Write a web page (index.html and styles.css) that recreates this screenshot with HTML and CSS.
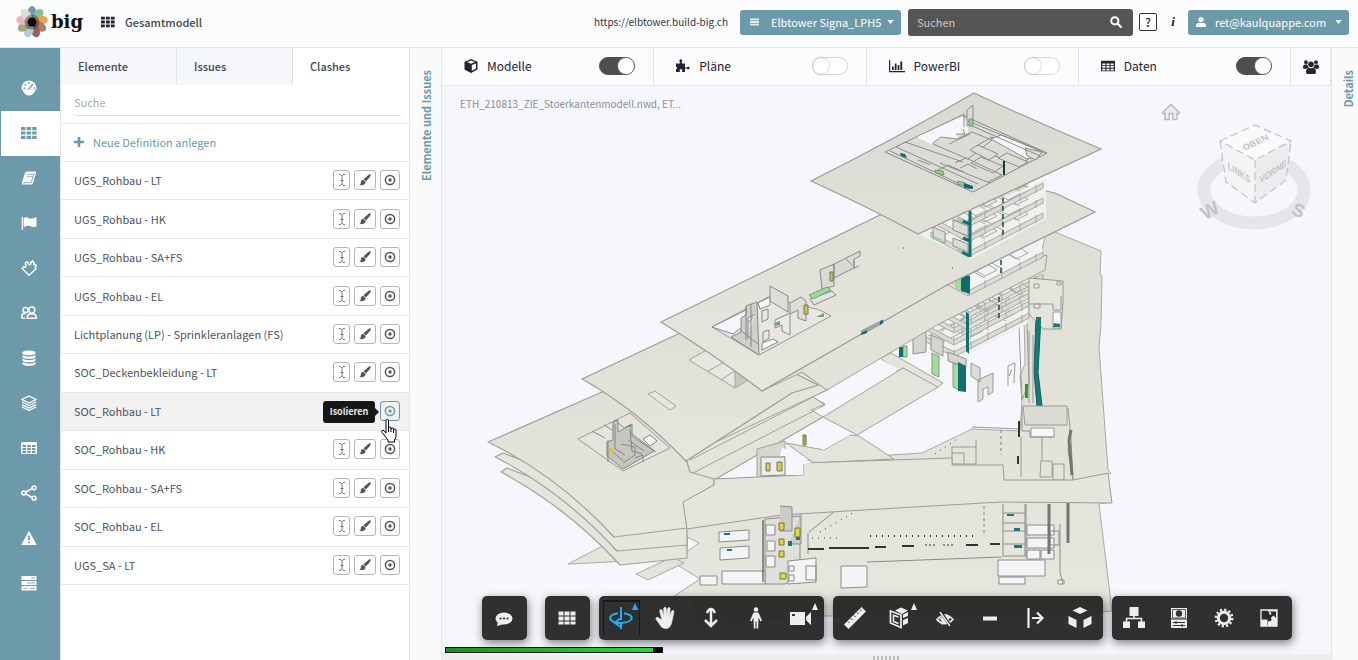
FILE: index.html
```html
<!DOCTYPE html>
<html lang="de">
<head>
<meta charset="utf-8">
<title>big – Gesamtmodell</title>
<link rel="stylesheet" href="styles.css">
</head>
<body>
<svg class="sprite" aria-hidden="true">
  <symbol id="grid" viewBox="0 0 16 14"><path d="M0 1h4.400v3.200H0zM5.600 1H10v3.200H5.600zM11.200 1h4.400v3.200h-4.400zM0 5.400h4.400v3.200H0zM5.600 5.400H10v3.200H5.600zM11.200 5.400h4.400v3.200h-4.400zM0 9.800h4.400V13H0zM5.600 9.800H10V13H5.600zM11.200 9.800h4.400V13h-4.400z"/></symbol>
  <symbol id="caret" viewBox="0 0 8 5"><path d="M0 0h8L4 5z"/></symbol>
  <symbol id="textcur" viewBox="0 0 10 14"><path d="M2 1.500q2.500-.3 3 1.200.5-1.500 3-1.200M5 2.500v9M2 12.500q2.500.3 3-1.200.5 1.500 3 1.200M3.500 7.500h3" fill="none" stroke="currentColor" stroke-width=".8"/></symbol>
  <symbol id="brush" viewBox="0 0 14 14"><path d="M13.500.5c.8.8 0 2-1 3.200L8 8.700 5.300 6.200 10.600 1.400C11.800.4 12.900-.1 13.500.5zM4.700 6.700l2.900 2.600c.3 2.700-2 4.600-7.200 3.300 1.900-.7 1.500-1.900 1.800-3.300C2.500 7.800 3.500 6.900 4.700 6.700z"/></symbol>
  <symbol id="target" viewBox="0 0 14 14"><circle cx="7" cy="7" r="4.600" fill="none" stroke="currentColor" stroke-width="1.500"/><circle cx="7" cy="7" r="1.700"/></symbol>
  <symbol id="table" viewBox="0 0 16 14"><path fill-rule="evenodd" d="M1 1h14q1 0 1 1v10q0 1-1 1H1q-1 0-1-1V2q0-1 1-1zM1.500 4v2H5V4zM6.200 4v2h3.600V4zM11 4v2h3.500V4zM1.500 7v2H5V7zM6.200 7v2h3.600V7zM11 7v2h3.500V7zM1.500 10v2H5v-2zM6.200 10v2h3.600v-2zM11 10v2h3.500v-2z"/></symbol>
</svg>

<header class="topbar">
  <a class="logo" href="#" aria-label="big">
    <svg class="flower" viewBox="-16 -16 32 32" aria-hidden="true">
      <g opacity=".9">
        <ellipse cy="-9" rx="4.500" ry="7" fill="#5b93a8"/>
        <ellipse cy="-9" rx="4.500" ry="7" fill="#7bb98c" transform="rotate(40)"/>
        <ellipse cy="-9" rx="4.500" ry="7" fill="#e79a45" transform="rotate(80)"/>
        <ellipse cy="-9" rx="4.500" ry="7" fill="#a5705f" transform="rotate(120)"/>
        <ellipse cy="-9" rx="4.500" ry="7" fill="#8f4f4a" transform="rotate(160)"/>
        <ellipse cy="-9" rx="4.500" ry="7" fill="#9fcad8" transform="rotate(200)"/>
        <ellipse cy="-9" rx="4.500" ry="7" fill="#98a06c" transform="rotate(240)"/>
        <ellipse cy="-9" rx="4.500" ry="7" fill="#efabb7" transform="rotate(280)"/>
        <ellipse cy="-9" rx="4.500" ry="7" fill="#dedccb" transform="rotate(320)"/>
      </g>
      <circle r="7.500" fill="#2a1c1c" opacity=".4"/><circle r="4.500" fill="#0d0808"/>
    </svg>
    <span>big</span>
  </a>
  <svg class="i16 dark" aria-hidden="true"><use href="#grid"/></svg>
  <h1>Gesamtmodell</h1>
  <span class="url">https://elbtower.build-big.ch</span>
  <button class="pill project" type="button">
    <svg viewBox="0 0 10 10" width="9" height="10" aria-hidden="true"><path d="M0 1h10v2H0zM0 4h10v2H0zM0 7h10v2H0z" opacity=".8"/></svg>
    <span>Elbtower Signa_LPH5</span>
    <svg class="caret"><use href="#caret"/></svg>
  </button>
  <form class="search" role="search">
    <input type="text" placeholder="Suchen" aria-label="Suchen">
    <button type="button" aria-label="Suche starten"><svg viewBox="0 0 12 12" width="12" height="12"><circle cx="4.800" cy="4.800" r="3.600" fill="none" stroke="#fff" stroke-width="2"/><path d="M7.500 7.500l3.500 3.500" stroke="#fff" stroke-width="2.300" stroke-linecap="round"/></svg></button>
  </form>
  <button class="help" type="button">?</button>
  <button class="info" type="button">i</button>
  <button class="pill user" type="button">
    <svg viewBox="0 0 10 10" width="10" height="10" aria-hidden="true"><circle cx="5" cy="2.600" r="2.600"/><path d="M0 10V8.500Q0 6 2.500 6h5Q10 6 10 8.500V10z"/></svg>
    <span>ret@kaulquappe.com</span>
    <svg class="caret"><use href="#caret"/></svg>
  </button>
</header>

<main class="shell">
  <nav class="rail" aria-label="Hauptnavigation">
    <a href="#" aria-label="Dashboard"><svg viewBox="0 0 16 16"><path d="M8 .5a7.500 7.500 0 0 0-7.300 9.200h14.600A7.500 7.500 0 0 0 8 .5zM1.500 10c1.300 3.500 3.600 5.500 6.500 5.500s5.200-2 6.500-5.500z"/><path d="M2.500 8.200h2M3.600 4l1.400 1.400M8 2v2M12.800 8h1.400M7.500 9.300l4.500-5" stroke="#6d9aaa" stroke-width="1.300"/></svg></a>
    <a href="#" class="active" aria-label="Modell"><svg viewBox="0 0 16 14"><use href="#grid"/></svg></a>
    <a href="#" aria-label="Handbuch"><svg viewBox="0 0 16 16"><path d="M5.500 1.500h9q1 0 .7 1L12 13q-.4 1.500-2 1.500H2Q.3 14.500.8 13L4 3q.4-1.500 1.500-1.500z"/><path d="M6.500 4.500h6M5.800 6.700h6" stroke="#6d9aaa" stroke-width=".7"/><path d="M2.500 12.700h7.600L13.300 3" stroke="#6d9aaa" stroke-width=".8" fill="none"/></svg></a>
    <a href="#" aria-label="Flaggen"><svg viewBox="0 0 16 16"><path d="M.7 2h1.300v13H.7zM2.700 3c4-2 5 1.500 8.500.6 1.500-.4 2.800-1 4.300-1v8.600c-4 2.200-5.500-.4-8-.4-2 0-3.300.7-4.800 1.400z"/></svg></a>
    <a href="#" aria-label="Erweiterungen"><svg viewBox="0 0 16 16"><path d="M8 15.200L1.200 8.500l1.500-1.700c1.500 1.200 3.300-.4 2-2C3.800 3.500 5 1.200 6.600 2.100c1.200.7.200 2.200 1.500 2.600 1.500.3 2.200-1.200 1.500-2.200L11.500 1l1.700 2c-1.200 1.500.5 2.700 1.700 1.700.8 1.500-1 2-.6 3.300l.7.800z" fill="none" stroke="#fff" stroke-width="1.400"/></svg></a>
    <a href="#" aria-label="Team"><svg viewBox="0 0 16 16"><g fill="none" stroke="#fff" stroke-width="1.500"><circle cx="4.500" cy="5" r="2.500"/><circle cx="10.800" cy="5" r="3"/><path d="M.8 13.300V11q0-2.500 2.500-2.500h1.500M.8 13.300h3.400M6.200 13.300q0-4.300 3-4.300h3q3 0 3 4.300z"/></g></svg></a>
    <a href="#" aria-label="Datenbank"><svg viewBox="0 0 16 16"><path d="M1.500 2.500Q2 .5 8 .5t6.500 2v1Q14 5.300 8 5.300T1.500 3.500zM1.500 5q2 1.700 6.500 1.700T14.500 5v2Q14 8.800 8 8.800T1.500 7zM1.500 8.500q2 1.700 6.500 1.700t6.500-1.700v2q-.5 1.800-6.500 1.800T1.500 10.500zM1.500 12q2 1.700 6.500 1.700t6.500-1.700v1.700q-.5 2-6.500 2t-6.500-2z"/></svg></a>
    <a href="#" aria-label="Ebenen"><svg viewBox="0 0 16 16"><path d="M8 1l7 3.500L8 8 1 4.500zM1 7l7 3.500L15 7M1 9.600l7 3.500 7-3.500M1 12l7 3.400 7-3.400" fill="none" stroke="#fff" stroke-width="1.300"/></svg></a>
    <a href="#" aria-label="Tabellen"><svg viewBox="0 0 16 14"><use href="#table"/></svg></a>
    <a href="#" aria-label="Teilen"><svg viewBox="0 0 16 16"><path d="M12 3L3 8l9 5" fill="none" stroke="#fff" stroke-width="1.500"/><g fill="#6d9aaa" stroke="#fff" stroke-width="1.500"><circle cx="2.800" cy="8" r="1.900"/><circle cx="13" cy="2.800" r="1.900"/><circle cx="13" cy="13.200" r="1.900"/></g></svg></a>
    <a href="#" aria-label="Warnungen"><svg viewBox="0 0 16 16"><path d="M8 .8L15.800 15H.2z"/><path d="M8 5.500v4.700M8 11.500v1.800" stroke="#6d9aaa" stroke-width="1.700"/></svg></a>
    <a href="#" aria-label="Server"><svg viewBox="0 0 16 16"><path d="M.5 1h15v4H.5zM.5 6h15v4H.5zM.5 11h15v4.500H.5z"/><path d="M10 3h4M6 8h8M3 13.300h3M9 13.300h5" stroke="#6d9aaa" stroke-width=".8"/></svg></a>
  </nav>

  <section class="panel">
    <div class="tabs" role="tablist">
      <button type="button" role="tab" aria-selected="false">Elemente</button>
      <button type="button" role="tab" aria-selected="false">Issues</button>
      <button type="button" role="tab" aria-selected="true">Clashes</button>
    </div>
    <div class="filter"><input type="text" placeholder="Suche" aria-label="Suche"></div>
    <button class="add" type="button"><svg viewBox="0 0 10 10" width="10" height="10" aria-hidden="true"><path d="M3.700 0h2.600v3.700H10v2.600H6.300V10H3.700V6.300H0V3.700h3.700z"/></svg>Neue Definition anlegen</button>
    <ul class="list">
      <li><span>UGS_Rohbau - LT</span><button class="b-name" type="button" aria-label="Umbenennen"><svg><use href="#textcur"/></svg></button><button class="b-brush" type="button" aria-label="Einfärben"><svg><use href="#brush"/></svg></button><button class="b-iso" type="button" aria-label="Isolieren"><svg><use href="#target"/></svg></button></li>
      <li><span>UGS_Rohbau - HK</span><button class="b-name" type="button" aria-label="Umbenennen"><svg><use href="#textcur"/></svg></button><button class="b-brush" type="button" aria-label="Einfärben"><svg><use href="#brush"/></svg></button><button class="b-iso" type="button" aria-label="Isolieren"><svg><use href="#target"/></svg></button></li>
      <li><span>UGS_Rohbau - SA+FS</span><button class="b-name" type="button" aria-label="Umbenennen"><svg><use href="#textcur"/></svg></button><button class="b-brush" type="button" aria-label="Einfärben"><svg><use href="#brush"/></svg></button><button class="b-iso" type="button" aria-label="Isolieren"><svg><use href="#target"/></svg></button></li>
      <li><span>UGS_Rohbau - EL</span><button class="b-name" type="button" aria-label="Umbenennen"><svg><use href="#textcur"/></svg></button><button class="b-brush" type="button" aria-label="Einfärben"><svg><use href="#brush"/></svg></button><button class="b-iso" type="button" aria-label="Isolieren"><svg><use href="#target"/></svg></button></li>
      <li><span>Lichtplanung (LP) - Sprinkleranlagen (FS)</span><button class="b-name" type="button" aria-label="Umbenennen"><svg><use href="#textcur"/></svg></button><button class="b-brush" type="button" aria-label="Einfärben"><svg><use href="#brush"/></svg></button><button class="b-iso" type="button" aria-label="Isolieren"><svg><use href="#target"/></svg></button></li>
      <li><span>SOC_Deckenbekleidung - LT</span><button class="b-name" type="button" aria-label="Umbenennen"><svg><use href="#textcur"/></svg></button><button class="b-brush" type="button" aria-label="Einfärben"><svg><use href="#brush"/></svg></button><button class="b-iso" type="button" aria-label="Isolieren"><svg><use href="#target"/></svg></button></li>
      <li class="hovered"><span>SOC_Rohbau - LT</span><button class="b-iso lit" type="button" aria-label="Isolieren" aria-describedby="tip"><svg><use href="#target"/></svg></button>
        <div class="tip" id="tip" role="tooltip">Isolieren</div>
        <svg class="pointer" viewBox="0 0 18 24" aria-hidden="true"><path d="M5 1.500q0-1 1.200-1t1.300 1V9q0-1 1.200-1t1.300 1v1q0-1 1.200-1t1.300 1v1q0-1 1.200-1t1.300 1v6q0 2-1.500 4v2H7v-2L1 13.500q-.8-1.800.5-2.300T5 14z" fill="#fff" stroke="#000"/><path d="M7.500 8v5M10 9.500V13M12.500 11v3" stroke="#000"/></svg></li>
      <li><span>SOC_Rohbau - HK</span><button class="b-name" type="button" aria-label="Umbenennen"><svg><use href="#textcur"/></svg></button><button class="b-brush" type="button" aria-label="Einfärben"><svg><use href="#brush"/></svg></button><button class="b-iso" type="button" aria-label="Isolieren"><svg><use href="#target"/></svg></button></li>
      <li><span>SOC_Rohbau - SA+FS</span><button class="b-name" type="button" aria-label="Umbenennen"><svg><use href="#textcur"/></svg></button><button class="b-brush" type="button" aria-label="Einfärben"><svg><use href="#brush"/></svg></button><button class="b-iso" type="button" aria-label="Isolieren"><svg><use href="#target"/></svg></button></li>
      <li><span>SOC_Rohbau - EL</span><button class="b-name" type="button" aria-label="Umbenennen"><svg><use href="#textcur"/></svg></button><button class="b-brush" type="button" aria-label="Einfärben"><svg><use href="#brush"/></svg></button><button class="b-iso" type="button" aria-label="Isolieren"><svg><use href="#target"/></svg></button></li>
      <li><span>UGS_SA - LT</span><button class="b-name" type="button" aria-label="Umbenennen"><svg><use href="#textcur"/></svg></button><button class="b-brush" type="button" aria-label="Einfärben"><svg><use href="#brush"/></svg></button><button class="b-iso" type="button" aria-label="Isolieren"><svg><use href="#target"/></svg></button></li>
    </ul>
  </section>

  <button class="strip strip-left" type="button"><span>Elemente und Issues</span></button>

  <section class="work">
    <div class="modules">
      <label><svg viewBox="0 0 14 14" aria-hidden="true"><path d="M7 0l6.500 2.700v7.800L7 14 .5 10.500V2.700zM7 1.500L3 3l4 1.700L11 3zM7.800 6v5.800l4.200-2.200V4.400z" fill-rule="evenodd"/></svg><span>Modelle</span><input type="checkbox" role="switch" checked></label>
      <label><svg viewBox="0 0 14 14" aria-hidden="true"><path d="M0 4.500h3.800V3C3 2.200 3.400.3 4.800.3S6.600 2.200 5.800 3v1.500H9v4h2c.3-1.300 2.700-1.100 2.700.5s-2.400 1.800-2.700.5H9V13H6.200v-2.700H3.800V13H0V9.800h1V8H0z"/></svg><span>Pläne</span><input type="checkbox" role="switch"></label>
      <label><svg class="wide" viewBox="0 0 16 14" aria-hidden="true"><path d="M0 1h1.200v11H16v1.200H0zM3 7.500h1.700V11H3zM5.800 4.500h1.700V11H5.800zM8.600 6h1.700v5H8.600zM11.300 2.500h1.900V11h-1.900z"/></svg><span>PowerBI</span><input type="checkbox" role="switch"></label>
      <label><svg aria-hidden="true"><use href="#table"/></svg><span>Daten</span><input type="checkbox" role="switch" checked></label>
      <button type="button" aria-label="Benutzer"><svg class="wide" viewBox="0 0 16 14"><circle cx="3" cy="2.200" r="1.900"/><circle cx="13" cy="2.200" r="1.900"/><circle cx="8" cy="4.300" r="2.800"/><path d="M0 7.500Q0 4.500 2 4.500h2.300Q4.500 6.500 6 7.500q-2 .2-2.500 1.300H.8Q0 8.500 0 7.500zM16 7.500q0-3-2-3h-2.300q-.2 2-1.700 3 2 .2 2.500 1.300h2.700Q16 8.500 16 7.500zM3 12q0-4 3-4.300 2 1 4 0 3 .3 3 4.300 0 2-1.500 2h-7Q3 14 3 12z"/></svg></button>
    </div>

    <div class="viewer">
      <svg class="model" viewBox="442 86 889 568" role="img" aria-label="3D-Modell des Gebäudes">
        <defs>
          <g id="frame" fill="none" stroke="#a9a9a4">
            <path d="M931 237l37 20 75-39v-5l-75 39-37-20z" fill="#dcdcd6"/><path d="M968 249v8M985 241v8M1002 232v8M1020 223v8M1036 215v8"/>
            <path d="M955 243l72-37M942 236l70-35M985 239l-30-16M1003 230l-32-17M1020 221l-31-16M975 231l12-6 10 6-12 6zM1008 215l12-6 8 5-12 6z"/>
          </g>
          <linearGradient id="roof" x1="0" y1="0" x2="0" y2="1"><stop offset="0" stop-color="#dadad4"/><stop offset="1" stop-color="#e0dfd8"/></linearGradient>
          <linearGradient id="deck" x1="0" y1="0" x2="0" y2="1"><stop offset="0" stop-color="#dfdfd8"/><stop offset="1" stop-color="#e6e6df"/></linearGradient>
        </defs>
        <g stroke="#aaaaa5" fill="url(#deck)" stroke-linejoin="round">
          <!-- rear wing and ground floor -->
          <path d="M1046 234l9-2 46 19-1 24 2 1-1 49-2 22 9 123 3 3-4 2 4 27-12 2 13 107-55 5H820l-120 6-10-23h-20l30-20-32-20-100 5 48-25 70-23 94-12v-42l142-9 50-24 48 2 2-30-2-25 5-12-1-50z"/>
          <path d="M636 574l36-17 12 6-36 17z"/>
          <path d="M687 537l12 6-12 9z" fill="#f6f7fc"/>
        </g>
        <path d="M1036 317h5l-3 55 4 34h-5l-3-34z" fill="#16797a" stroke="#0d5f60"/>
        <g stroke="#999a95" fill="#deded8">
          <path d="M1019 327l8-4 2 60-7 17zM1029 331v72M1033 335v68" fill="none"/>
          <path d="M1023 406h44v19h-42z" fill="#dcdcd6"/><path d="M1031 428h23v9h-23z" fill="#f6f7fc"/><path d="M1022 407v24h8v6h24" fill="none"/>
          <path d="M1042 438v23h10v16h-12l1-17M1053 464h11v16h-11zM1068 408l3 30 2 42M1070 430l-2 20 5 30M1021 437v40" fill="none"/>
          <path d="M952 447h24v17h-24zM952 453h12v11M976 440v8M972 427l48 2" fill="none"/>
          <path d="M971 363l9 5v14l-9-6zM978 380l15-7v19l-5 3v-8l-5 2v10l-5 3z"/>
          <path d="M1008 386v-20l7-3-1 20M1012 369l-3 7" fill="none"/>
        </g>
        <path d="M1025 384h3v14h-3z" fill="#2b9d24"/><path d="M1019 421v16M1018 456v8" stroke="#333" stroke-width="2"/>
        <!-- lower tower -->
        <path d="M880 330l87 25 60-31 3-60-90 20z" fill="#f0f0ee"/>
        <use href="#frame" x="-14" y="100"/><use href="#frame" x="-14" y="88"/><use href="#frame" x="-14" y="76"/><use href="#frame" y="61"/><use href="#frame" y="73"/>
        <g stroke="#8f908c" fill="#d5d5cf"><path d="M913 338l13-7v21l-13 2zM931 335l12 5v16l-12-6zM948 352l18 7v8l-18-6z"/></g>
        <g fill="#a7d9a2" stroke="#75a574"><path d="M932 353l7 3v21l-7-3zM953 363l6 2v25l-6-3zM903 346h4v11h-4z"/></g>
        <path d="M958 362l8 4v26l-8-1zM899 347h4v10h-4zM966 312l3 2v40l-3-3z" fill="#116f70"/>
        <!-- link bridges -->
        <g stroke="#a3a39e" fill="#e4e4dc">
          <path d="M880 358l11-5 52 30-6 5-34-20-5 3z"/>
          <path d="M823 417l80-49 35 19-81 48z"/>
          <path d="M786 443l38 7 26-15 9 1 35 23-80 4z"/>
          <path d="M700 490l14-10 109-63-12-7 14-6-12-7 14-7-27-19-180 90z"/>
          <path d="M693 473l132-68-12-8M714 480l109-63M690 460l123-63M686 456l141-66" fill="none"/>
          <path d="M827 391l53-32 18 10-51 31-22 14-2-4 4-6-13-7z" fill="#f6f7fc" stroke="none"/>
          <path d="M814 435l9-15 27 15-27 15z" fill="#f6f7fc" stroke="none"/>
          <path d="M757 480v-31l28-8v35z" fill="#d7d7d1"/>
        </g>
        <!-- front podium decks -->
        <g stroke="#a0a09b" stroke-width="1.200" fill="#e5e5de" stroke-linejoin="round">
          <path d="M501 472l6-4 180 70v20l-67 7q-52-57-119-93z"/>
          <path d="M495 457l8-4 184 70v22l-70 6q-56-61-122-94z"/>
          <path d="M488 442l114-50 60-15 28 95 24 7v6l-30 17 3 26-73 9q-56-61-126-95z" fill="url(#deck)"/>
        </g>
        <path d="M578 439l52-26 40 35-47 23z" fill="#e4e4df" stroke="#999a96"/>
        <g stroke="#858783" fill="#c6c6c1">
          <path d="M592 431l13 7M604 425l40 25M614 420l42 32" fill="none"/>
          <path d="M607 442l6-2v-18l5-2v12l14-8v12l22 15-31 18-16-13z"/>
          <path d="M608 440v22M615 424v25l10 6M621 444l14 3v8l-12 8M630 429l2 22 10 3M635 458l8-3v7M613 452l10 9M628 440l16 11" fill="none"/>
          <path d="M643 439l7-4 7 6-7 5z" fill="#f6f7fc"/>
        </g>
        <path d="M609 448h4v6h-4z" fill="#cfcb45"/><path d="M625 427l6-3v3z" fill="#579b65"/>
        <!-- second deck -->
        <path d="M582 379l98-46 18-8 120 60-26 8-106 68q-50-52-104-82z" fill="url(#deck)" stroke="#9b9b97" stroke-width="1.200"/>
        <g stroke="#a3a39e" fill="#e7e7e2"><path d="M689 360l21-12 42 23-17 17zM708 371l20-11M721 380l18-12"/><path d="M648 394l7-3 21 15-6 4z"/><path d="M735 388v-17l15 8z" fill="#c8c8c3"/></g>
        <!-- fourth slab -->
        <path d="M762 391l40-19 25 18 110-65 108-55 2-15-100 30-120 60z" fill="#e2e2da" stroke="#a3a39e"/>
        <path d="M947 285l21 12 74-40v-18l-80 30z" fill="#f2f3f5"/><use href="#frame" y="39"/>
        <path d="M955 277l7 3v12l-7-3z" fill="#a7d9a2"/><path d="M961 273l9 3v18l-9-3z" fill="#0f6d70"/>
        <g stroke="#999a95" fill="#e4e4dc"><path d="M1029 278l34 3v22l-2 26h-18l-14-15z"/><path d="M1029 304h24v6h8v-14"/><path d="M1034 284h5v4h-5zM1034 304h6v4h-6zM1057 282h4v3h-4z" fill="none"/><path d="M1053 312h8v16h-8z" fill="#f6f7fc"/></g>
        <path d="M1036 317h5v12h-5zM1054 323l6 1v3h-7z" fill="#16797a"/>
        <!-- third slab -->
        <path d="M661 322l223-109 80-40 91 20 40 19-148 73-185 106q-50-38-101-69z" fill="url(#deck)" stroke="#9b9b97" stroke-width="1.200"/>
        <path d="M712 327l56-30 52 13 11 6-72 39z" fill="#e6e6e2" stroke="#999a96"/>
        <g stroke="#888986" fill="#cfcfca">
          <path d="M712 327l40-20v12l-19 15z" fill="#f6f7fc"/><path d="M731 337l10-5v-14l5-3v-9l11-4 2 53zM746 307v33M751 305v42M740 330l18 14M755 314l-7 4v20"/>
          <path d="M770 286l18 10v16l-18-11zM790 303l11-6 5 4v20l-8-3v-8l-8 4z" fill="#deded9"/>
          <path d="M762 311l6-2v10l-6 3zM775 320l15-7v22l-8-4v-6l-7 3zM763 332l6-2v8l-6 4z" fill="#e9e9e4"/>
          <path d="M762 343l11-4 5 3-16 8zM758 303l12-6v8l-10 4z" fill="#f6f7fc"/>
          <path d="M820 270l14-6v22l-12 3zM834 264l26-13v5l-6 3v9l-20 10z" fill="#dadad5"/><path d="M846 259l6 6M854 260v8l5-2" fill="none"/>
          <path d="M810 299l22-8 4 4-22 10z" fill="#e4e4df"/>
        </g>
        <path d="M809 295l18-8 4 3-18 9z" fill="#a2d69c" stroke="#76a173"/><path d="M804 305h4v9h-4zM830 272h3v9h-3z" fill="#c9c33b" stroke="#777"/>
        <path d="M775 323l5-2v4l-5 1zM816 317l8-4v4z" fill="#6aa870"/><path d="M861 331l22-11v3l-20 11z" fill="#a0a6a0" stroke="#999"/><path d="M861 333l6-3v3l-6 2zM880 321l3-1v3l-3 2z" fill="#116f70"/>
        <!-- upper tower -->
        <path d="M918 234l53 25 75-40v-40z" fill="#f0f0f0"/>
        <use href="#frame"/><use href="#frame" y="-15"/><use href="#frame" y="-30"/>
        <g stroke="#8f908c" fill="#dcdcd6"><path d="M933 227l12 5v11l-12-5zM953 220l15 6v10l-15-6zM953 238l15 6v8l-15-6z"/></g>
        <path d="M970 211v46M962 221l8 3M963 238l7 3M962 252l8 4" stroke="#11716f" stroke-width="3"/>
        <path d="M1003 190v48M1001 260v15M999 297v22" stroke="#234b42" stroke-width="1.500" stroke-dasharray="5 3"/>
        <path d="M934 238l8 3M957 219l6 2M957 249l5 2" stroke="#9bd096" stroke-width="3"/>
        <!-- roof slab -->
        <path d="M974 93q60 28 127 56l-183 85q-52-28-107-53 84-42 163-88z" fill="url(#roof)" stroke="#9b9b97" stroke-width="1.200"/>
        <path d="M885 152l77-37 85 38-74 39z" fill="#dcdcd6" stroke="#888986"/>
        <path d="M917 137l44-20 7 4v12l-12 1 4 6-16 2-11 3zM990 141l9-5 40 14-12 1 5 6-4 3z" fill="#f6f7fc"/>
        <g stroke="#8b8d89" fill="#dcdcd6">
          <path d="M933 143l8-6 16 2 15-7 20 8-24 19-35-15zM976 146l16-9 40 20-14 8-38-15z"/>
          <path d="M991 139l10-4 39 15-11 1 3 7-5 1z" fill="#f6f7fc"/>
          <path d="M970 150l8-5 20 9-9 6zM971 163l10-6 22 9-10 7zM998 158l9-5 21 9-9 5zM955 163l11-5 36 17-14 7"/>
          <path d="M967 110l6-5v19l-6 2zM964 113v14M968 121l77 32M970 125l70 31M1025 148l17 4-6 8-9-4zM940 163l50 20M890 151l80 38M896 147l82 37M905 142l58 20"/>
          <path d="M949 144l21-10M956 134h9l-2-5M960 168l8-4 9 5M918 160l13 5M938 170l10-5 16 7" fill="none"/>
        </g>
        <path d="M969 119h4v7h-4zM935 170l8 1 1 4-8-2zM958 181l7 2v3l-8-2z" fill="#91cf8f" stroke="#789775"/><path d="M964 183l9 3v3l-9-1zM900 153l5 1 2 4-6-2z" fill="#0e6b6b"/>
        <path d="M1004 161v14" stroke="#123c38" stroke-width="2"/>
        <!-- front ledge -->
        <path d="M683 502l31-17v-6l89-4v-12l149-5v7h51l1 15h69l35-7 4 30-111-1-87 5-133 8-94 14z" fill="#e5e5de" stroke="#9c9d98"/>
        <path d="M782 447l30 16-9 1v11h-18v-19h-5z" fill="#f6f7fc"/>
        <path d="M761 476v-19h24v18z" fill="#ececea" stroke="#888"/><path d="M766 463h4v8h-4zM777 462h5v9h-5z" fill="#d2cd43" stroke="#777"/>
        <path d="M803 435h3v10h-3z" fill="#b2ac35" stroke="#777"/>
        <!-- ground floor openings -->
        <g fill="#f3f4f6" stroke="#8a8c88">
          <path d="M719 532l30-2v10l-30 2zM720 548l29-2v12l-29 2z"/><path d="M765 519l35-3v58l-15 10h-20z" fill="#e0e0da"/>
          <path d="M766 525h9v10h-9zM767 541h8v10h-8zM766 556h9v11h-9zM788 561l28-3v24l-28 2zM789 566h5v5h-5zM789 575h5v6h-5zM806 566h10v14h-10z"/>
          <path d="M841 566h26v21l-26 1zM998 560h47v16h-47zM999 577h26v7h-26zM1027 525h27v10h-27zM1027 538h27v10h-27zM1027 550h13v9h-13zM1041 550h13v9h-13zM1058 580h6v4h-6z"/>
          <path d="M722 571h43v13h-43zM700 576h17v9h-17z"/>
          <path d="M1003 504v52h22v-52M1003 513h22M1003 523h22M1003 531h22M1003 544h22M1026 504v54M1060 524v48l3 12M1050 531h9v14h-9z" fill="none"/>
          <path d="M809 532l25-20M808 533v21M867 562l135-5M698 625v-20" fill="none"/>
          <path d="M780 506l12 1v24h-12M801 514v30h-12" fill="#ccccc7"/>
        </g>
        <g fill="#ddd943" stroke="#77753d"><path d="M779 523h5v7h-5zM779 539h5v6h-5zM779 551h5v6h-5zM795 528h5v9h-5zM780 573h6v6h-6z"/></g>
        <g fill="#1d7776"><path d="M788 541h4v5h-4zM724 533h6v2h-6zM796 537h4v3h-4zM1007 514h7v2h-7zM1014 528h6v3h-6zM1014 545h8v3h-8zM727 549h5v2h-5z"/></g>
        <g stroke="#30332f" fill="none"><path d="M808 549h16M829 548h40M875 547h11M902 546h12M966 545h12M990 544h10" stroke-width="2"/><path d="M925 545h10M943 545h10" stroke-dasharray="2 2"/><path d="M870 536h108" stroke-dasharray="1 5" stroke-width="2"/><path d="M820 532l36-21M812 538h30M935 454l22-15" stroke-dasharray="1 5"/><path d="M984 506v28M1001 430v25" stroke="#5f9964" stroke-dasharray="3 3"/></g>
        <path d="M1049 504v50M1068 503v40M1071 430l-2 10 3 35" stroke="#747672" stroke-width="3" fill="none"/>
        <path d="M763 520v62M952 268h1M903 248h1" stroke="#333" fill="none"/>
      </svg>

      <p class="files">ETH_210813_ZIE_Stoerkantenmodell.nwd, ET...</p>
      <button class="home" type="button" aria-label="Startansicht"><svg viewBox="0 0 20 18" width="20" height="18"><path d="M10 1.500l8.500 8-1 1.500-1.500-.7V16.500h-4.200v-6H8.200v6H4v-6.200L2.500 11l-1-1.500z" fill="#ececed" stroke="#b6b6b8" stroke-width="1.300"/></svg></button>
      <svg class="cube" viewBox="1195 120 120 112" role="img" aria-label="Ansichtswürfel">
        <ellipse cx="1254" cy="190" rx="50" ry="33" fill="none" stroke="#e5e6e9" stroke-width="13"/>
        <path d="M1220 141l35-16 36 16-5 39-31 23-29-21z" fill="#f6f6f8"/><path d="M1220 141l35 19v43l-29-21z" fill="#f4f4f6"/><path d="M1291 141l-36 19v43l31-23z" fill="#ececee"/><path d="M1220 141l35-16 36 16-36 19z" fill="#fafafb"/>
        <path d="M1220 141l35-16 36 16-36 19zM1255 160v43M1220 141l6 41 29 21 31-23 5-39" fill="none" stroke="#c2c3c6" stroke-width="1.200" stroke-dasharray="8 4"/>
        <g font-family="Liberation Sans" font-weight="bold" fill="#c3c4c7" text-anchor="middle"><text transform="matrix(.85 -.4 .45 .75 1257 145)" font-size="10">OBEN</text><text transform="matrix(.75 .5 0 1 1239 176)" font-size="10">LINKS</text><text transform="matrix(.75 -.5 0 1 1273 175)" font-size="10">VORNE</text><text transform="translate(1213 216) rotate(-28)" font-size="19">W</text><text transform="translate(1296 216) rotate(25)" font-size="18">S</text></g>
      </svg>

      <div class="tools" role="toolbar" aria-label="Ansichtswerkzeuge">
        <div class="group solo"><button type="button" aria-label="Kommentar"><svg viewBox="0 0 24 24"><ellipse cx="12" cy="12.500" rx="8.500" ry="6"/><path d="M6 15l-1 5 7-2z"/><path d="M7.500 12.500h2M11 12.500h2M14.500 12.500h2" stroke="#222" stroke-width="1.700"/></svg></button></div>
        <div class="group"><button type="button" aria-label="Raster"><svg viewBox="0 0 24 24"><path d="M3.500 5.500h5v4h-5zM9.500 5.500h5v4h-5zM15.500 5.500h5v4h-5zM3.500 10.500h5v4h-5zM9.500 10.500h5v4h-5zM15.500 10.500h5v4h-5zM3.500 15.500h5v3h-5zM9.500 15.500h5v3h-5zM15.500 15.500h5v3h-5z"/></svg></button></div>
        <div class="group">
          <button class="on more" type="button" aria-label="Orbit"><svg viewBox="0 0 24 24"><path d="M12 1v13M12 18v5" stroke="#1fb0f5" stroke-width="2"/><path d="M9 7.200Q1.200 8.500 1.200 12q0 3.500 7 4.800M15 7.200q7.800 1.300 7.800 4.800-.5 4-10 5H7M11 12.500L6 17l5 3.500" fill="none" stroke="#1fb0f5" stroke-width="2"/></svg></button>
          <button type="button" aria-label="Verschieben"><svg viewBox="0 0 24 24"><path d="M8 14L5.800 5.300q-.3-1.500.8-1.800t1.600 1.200L10 10.500 9.700 2.800q0-1.600 1.200-1.600t1.300 1.500l.5 7.500 1-7.300q.2-1.500 1.400-1.300t1 1.700l-.6 7.600 2-5.300q.6-1.400 1.700-1t.6 1.900L17.500 17q-1.300 5.500-6 5.500-4 0-6-4.500l-3.200-4.500q-1-1.500.2-2t2.500.8z" stroke="#eee" stroke-width=".7"/></svg></button>
          <button type="button" aria-label="Zoom"><svg viewBox="0 0 24 24"><path d="M12 4v15M8 7q1.500-4 4-4t4 4M6 14l6 6 6-6" fill="none" stroke="#eee" stroke-width="2.500"/></svg></button>
          <button type="button" aria-label="Begehen"><svg viewBox="0 0 24 24"><circle cx="12" cy="3.500" r="2.300"/><path d="M9.500 6.500h5l3.500 8-1.500 1-2-4-.3 11h-1.700v-7h-1v7H9.800l-.3-11-2 4-1.500-1z"/></svg></button>
          <button class="more" type="button" aria-label="Kamera"><svg viewBox="0 0 24 24"><path d="M1 6h15v13H1zM17 11l5-5v13l-5-5z"/><path d="M3 8h3v2H3z" fill="#333"/></svg></button>
        </div>
        <div class="group">
          <button type="button" aria-label="Messen"><svg viewBox="0 0 24 24"><path d="M1 18.500L18.500 1 23 5.500 5.500 23z"/><path d="M5 15.500l1.500 1.500M8 12.500l1.500 1.500M11 9.500l1.500 1.500M14 6.500l1.500 1.500M17 3.500l1.500 1.500" stroke="#222"/></svg></button>
          <button class="more" type="button" aria-label="Schnitt"><svg viewBox="0 0 24 24"><path d="M7 4.500L13 1.500l7 3L14 8zM15 8.500l5-2.500v4l-5 2v2l5-2v5l-5 2.500z"/><path d="M2.500 5l10.500 4v12.500L2.500 17z" fill="#333" stroke="#eee" stroke-width="1.700"/><path d="M10.500 11l-5-1.800v6.300l5 2" fill="none" stroke="#eee" stroke-width="1.500"/></svg></button>
          <button type="button" aria-label="Ausblenden"><svg viewBox="0 0 24 24"><path d="M4 13.500q8-9 16 0-8 8-16 0z" fill="none" stroke="#eee" stroke-width="1.700"/><circle cx="12" cy="13" r="4"/><path d="M4 14l6 4.500M6 11.500l8 6.500M9 9l7 7M13 8.500l4 4" stroke="#eee" stroke-width="1.200"/><path d="M7 5l11 16" stroke="#222" stroke-width="3"/><path d="M7 6l10 14" stroke="#eee" stroke-width="1.500"/></svg></button>
          <button type="button" aria-label="Trennen"><svg viewBox="0 0 24 24"><path d="M5 10.500h14v4H5z"/></svg></button>
          <button type="button" aria-label="Nächste"><svg viewBox="0 0 24 24"><path d="M5.500 2v20M9 12h10M14 6.500l5.500 5.500-5.500 5.500" fill="none" stroke="#eee" stroke-width="2.200"/></svg></button>
          <button type="button" aria-label="Explosion"><svg viewBox="0 0 24 24"><path d="M12 1l7.500 3.500L12 8 4.500 4.500zM.5 10l8 4v8l-8-4zM23.500 10l-8 4v8l8-4z"/></svg></button>
        </div>
        <div class="group">
          <button type="button" aria-label="Struktur"><svg viewBox="0 0 24 24"><path d="M7.500 1h9v9h-9zM1 15.500h7V22H1zM16 15.500h7V22h-7z"/><path d="M12 10v3M4.500 16v-3.500h15V16" fill="none" stroke="#eee" stroke-width="1.500"/></svg></button>
          <button type="button" aria-label="Eigenschaften"><svg viewBox="0 0 24 24"><path d="M4 2h16v20H4z"/><path d="M5.500 3.500h13v8.500h-13z" fill="none" stroke="#333" stroke-width=".8"/><circle cx="12" cy="7.500" r="3.200" fill="#333"/><path d="M4 13h16M6 16.500h12M6 19.500h12M9 15v3M15 18v3" stroke="#333" stroke-width="1.100"/></svg></button>
          <button type="button" aria-label="Einstellungen"><svg viewBox="0 0 24 24"><circle cx="12" cy="12" r="5.700" fill="none" stroke="#eee" stroke-width="3"/><circle cx="12" cy="12" r="8.200" fill="none" stroke="#eee" stroke-width="2.500" stroke-dasharray="2.150 2.143"/></svg></button>
          <button type="button" aria-label="Vollbild"><svg viewBox="0 0 24 24"><path d="M4 4h16v16H4z" fill="#2b2b2b" stroke="#eee" stroke-width="1.300"/><path d="M4 13.500h6.500V20H4zM20 10v10h-9v-4.500l2.500-.5z"/><path d="M11 4h9v6l-5 5z"/><path d="M10.500 13.500L17 7" stroke="#2b2b2b" stroke-width="2.500"/><path d="M12.500 5.500H19V12z" fill="#2b2b2b"/></svg></button>
        </div>
      </div>
      <progress max="218" value="209" aria-label="Ladefortschritt"></progress>
    </div>
    <div class="resizer"></div>
  </section>

  <button class="strip strip-right" type="button"><span>Details</span></button>
</main>
</body>
</html>
```
FILE: styles.css
```css
* { box-sizing: border-box; }
body {
  margin: 0;
  height: 100vh;
  display: flex;
  flex-direction: column;
  overflow: hidden;
  background: #fff;
  color: #50525a;
  font: 11px/20px "Noto Sans CJK SC", "Noto Sans", sans-serif;
}
button, input { font: inherit; color: inherit; margin: 0; }
button { padding: 0; border: 0; background: none; cursor: pointer; }
svg { fill: currentColor; flex: none; display: block; }
.sprite { position: absolute; width: 0; height: 0; }

.topbar {
  display: flex;
  align-items: center;
  height: 48px;
  padding: 0 9px 3px 16px;
  border-bottom: 1px solid #e3e7ea;
  background: #fbfcfe;
  white-space: nowrap;
  flex: none;
}
.logo {
  display: flex;
  align-items: center;
  gap: 3px;
  width: 85px;
  color: #111;
  text-decoration: none;
  font: bold 18px/20px "DejaVu Serif", serif;
}
.flower { width: 32px; height: 32px; }
.i16 { width: 14px; height: 14px; }
.dark { color: #23242f; }
h1 { margin: 0 auto 0 10px; font-size: 11px; font-weight: 500; color: #44454d; }
.url { margin-right: 12px; font-size: 10px; color: #33343c; }
.pill {
  display: flex;
  align-items: center;
  height: 25px;
  border-radius: 3px;
  background: #6d9aaa;
  color: #fff;
  padding: 0 7px 0 10px;
}
.pill span { flex: 1; text-align: left; padding-left: 12px; }
.caret { width: 7px; height: 4px; }
.project { width: 161px; margin-right: 7px; }
.user { width: 161px; padding-left: 8px; }
.user span { padding-left: 9px; }
.search {
  display: flex;
  align-items: center;
  width: 225px;
  height: 27px;
  padding: 0 11px 0 9px;
  border-radius: 3px;
  background: #555;
}
.search input { flex: 1; min-width: 0; padding: 0; border: 0; background: none; color: #fff; outline: 0; }
.search input::placeholder { color: #c8c8c8; opacity: 1; }
.help {
  width: 18px;
  height: 18px;
  margin: 0 12px 0 6px;
  border: 1px solid #333;
  border-radius: 2px;
  font-size: 12px;
  font-weight: 500;
  line-height: 14px;
  color: #222;
}
.info { width: 8px; margin-right: 11px; color: #222; font: italic bold 13px/20px "Liberation Serif", serif; }

.shell { flex: 1; min-height: 0; display: flex; }
.rail { width: 60px; padding-top: 18px; background: #6d9aaa; color: #fff; flex: none; }
.rail a { display: flex; align-items: center; justify-content: center; height: 45px; padding: 0 3px 1px 0; color: #fff; }
.rail svg { width: 16px; height: 16px; }
.rail .active { margin-left: 1px; padding-right: 4px; background: #fff; color: #6d9aaa; }

.panel { width: 350px; border: solid #e3e7ea; border-width: 0 1px; background: #fff; flex: none; }
.tabs { display: flex; height: 37px; }
.tabs button { flex: 1; padding: 0 0 1px 17px; border-right: 1px solid #dbe5e9; background: #f6f7fb; text-align: left; font-weight: 500; color: #44464f; }
.tabs [aria-selected="true"] { background: #fff; border-right-color: #fff; }
.filter { height: 39px; padding: 4px 7px 0 12px; border-bottom: 1px solid #e7e7e7; }
.filter input { display: block; width: 100%; height: 27px; padding: 0 1px; border: 0; border-bottom: 1px solid #ddd; border-radius: 3px; outline: 0; background: none; }
.filter input::placeholder { color: #aaa; opacity: 1; }
.add { display: flex; align-items: center; gap: 9px; width: 100%; height: 38px; padding: 0 0 2px 13px; border-bottom: 1px solid #e7e7e7; color: #6d9aaa; }
.list { display: flex; flex-direction: column; min-height: 423px; margin: 0; padding: 0; list-style: none; }
.list li { position: relative; display: flex; align-items: center; flex: 1 0 38px; gap: 4px; padding: 0 9px 1px 13px; border-bottom: 1px solid #e7e7e7; }
.list span { flex: 1; }
.list button { display: grid; place-items: center; height: 20px; border: 1px solid #b5b5b5; border-radius: 3px; background: #fff; color: #555; }
.b-name { width: 17px; }
.b-brush { width: 22px; }
.b-iso { width: 20px; }
.b-name svg { width: 10px; height: 14px; }
.b-brush svg { width: 12px; height: 12px; }
.b-iso svg { width: 14px; height: 14px; }
.list .hovered { background: #f2f2f2; }
.list .lit { border-color: #6d9aaa; background: #f2f2f2; color: #6d9aaa; }
.tip {
  position: absolute;
  right: 34px;
  top: 8px;
  width: 52px;
  border-radius: 3px;
  background: #171717;
  color: #e8e8e8;
  text-align: center;
  font: bold 9px/22px "Noto Sans CJK SC", sans-serif;
}
.tip::after { content: ""; position: absolute; left: 100%; top: 7px; border: 4px solid transparent; border-left-color: #171717; border-right-width: 0; }
.pointer { position: absolute; right: 10px; top: 26px; width: 18px; height: 24px; z-index: 2; }

.strip { display: flex; justify-content: center; align-items: flex-start; padding-top: 22px; background: #fafafa; color: #6d9aaa; font-weight: 700; flex: none; }
.strip span { writing-mode: vertical-rl; transform: rotate(180deg); }
.strip-left { width: 32px; border-right: 1px solid #e3e7ea; }
.strip-right { width: 27px; padding-left: 5px; border-left: 1px solid #e3e7ea; }

.work { flex: 1; min-width: 0; display: flex; flex-direction: column; }
.modules { display: flex; height: 38px; border-bottom: 1px solid #e3e7ea; background: #fbfcfe; color: #23242f; font-size: 12px; flex: none; }
.modules label { flex: 1; display: flex; align-items: center; padding: 0 18px 1px 22px; border-right: 1px solid #e3e7ea; }
.modules label span { flex: 1; padding-left: 9px; }
.modules svg { width: 14px; height: 14px; }
.modules .wide { width: 16px; }
.modules button { width: 40px; display: grid; place-items: center; border-right: 1px solid #e3e7ea; }
.modules input {
  appearance: none;
  display: flex;
  width: 36px;
  height: 18px;
  border: 1px solid #d6d6d6;
  border-radius: 9px;
  background: #fff;
}
.modules input::before { content: ""; width: 16px; height: 16px; border-radius: 50%; background: #fff; box-shadow: 0 0 2px #999; }
.modules input:checked { justify-content: flex-end; border-color: #4d4e50; background: #4d4e50; }

.viewer { position: relative; flex: 1; min-height: 0; background: #f6f7fc; }
.model { width: 100%; height: 100%; }
.files { position: absolute; left: 18px; top: 8px; margin: 0; font-size: 10px; color: #8d8d92; }
.home { position: absolute; right: 150px; top: 17px; }
.cube { position: absolute; right: 16px; top: 34px; width: 120px; height: 112px; }
.tools { position: absolute; left: 0; right: 0; bottom: 14px; display: flex; justify-content: center; gap: 9px; }
.group { display: flex; border-radius: 5px; background: rgba(34, 35, 34, .94); box-shadow: 1px 3px 10px rgba(0, 0, 0, .5); color: #eee; }
.solo { margin-right: 9px; }
.group button { position: relative; display: grid; place-items: center; width: 45px; height: 44px; }
.group svg { width: 24px; height: 24px; }
.group .on::before { content: ""; position: absolute; inset: 4px; border: 1px solid #191919; border-width: 2px 1px 0; }
.more::after { content: ""; position: absolute; right: 6px; top: 7px; border: 3px solid transparent; border-top: 0; border-bottom: 7px solid #eee; }
.on.more::after { border-bottom-color: #1fb0f5; }
progress {
  appearance: none;
  position: absolute;
  left: 3px;
  bottom: 1px;
  width: 218px;
  height: 6px;
  border: 1px solid #111;
  background: #000;
}
progress::-webkit-progress-bar { background: #000; }
progress::-webkit-progress-value { background: linear-gradient(90deg, #17921c, #25dc2b); }
.resizer { height: 6px; background: #eee; display: grid; justify-content: center; align-content: end; flex: none; }
.resizer::before { content: ""; width: 28px; height: 4px; background: repeating-linear-gradient(90deg, #bbb 0 2px, transparent 2px 4px); }
```
